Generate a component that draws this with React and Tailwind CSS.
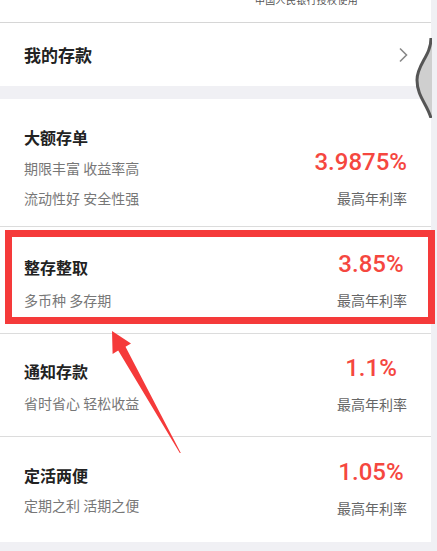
import React from 'react';

const cjk = { fontFamily: '"Noto Sans CJK SC", "Noto Sans", sans-serif' };
const num = { fontFamily: 'Roboto, "Noto Sans", sans-serif' };

const products = [
  { title: '大额存单', lines: ['期限丰富 收益率高', '流动性好 安全性强'], rate: '3.9875%', pad: 'pt-[27px] pb-[17px]', gap: 'mt-[8px]', border: true },
  { title: '整存整取', lines: ['多币种 多存期'], rate: '3.85%', pad: 'pt-[29px] pb-[22px]', gap: 'mt-[11px]', border: true },
  { title: '通知存款', lines: ['省时省心 轻松收益'], rate: '1.1%', pad: 'pt-[26px] pb-[21px]', gap: 'mt-[10px]', border: true },
  { title: '定活两便', lines: ['定期之利 活期之便'], rate: '1.05%', pad: 'pt-[27px] pb-[23px]', gap: 'mt-[8px]', border: false },
];

function Product({ p }) {
  return (
    <div className={`flex items-stretch justify-between pl-[24px] pr-[24px] ${p.pad} ${p.border ? 'border-b border-[#dcdcdc]' : ''}`}>
      <div className="flex flex-col">
        <div className="text-[16px] leading-[22px] font-bold text-[#222]" style={cjk}>{p.title}</div>
        {p.lines.map((l, i) => (
          <div key={i} className={`text-[14px] leading-[22px] text-[#777] ${i === 0 ? (p.lines.length > 1 ? 'mt-[9px]' : p.gap) : p.gap}`} style={cjk}>
            {l}
          </div>
        ))}
      </div>
      <div className="flex flex-col items-end justify-end">
        <div className="min-w-[72px] text-center text-[24px] leading-[16px] font-medium text-[#f5473f]" style={num}>
          {p.rate}
        </div>
        <div className="mt-[17px] text-[14px] leading-[22px] text-[#666]" style={cjk}>最高年利率</div>
      </div>
    </div>
  );
}

export default function App() {
  return (
    <div className="relative w-[437px] h-[551px] overflow-hidden bg-[#f0f0f4]">
      <div className="w-[431px] bg-white">
        {/* top caption, cut off by the screen edge */}
        <div className="h-[23px] overflow-hidden border-b border-[#d6d6d6]">
          <p className="mt-[-6px] pl-[255px] text-[10px] leading-[12px] text-[#555] tracking-[0.3px]" style={cjk}>
            中国人民银行授权使用
          </p>
        </div>
        {/* my deposits */}
        <div className="h-[63px] flex items-center justify-between pl-[24px] pr-[22px]">
          <span className="text-[17px] font-bold text-[#222]" style={cjk}>我的存款</span>
          <svg width="11" height="16" viewBox="0 0 11 16" fill="none">
            <path d="M2 1.5 L8.5 8 L2 14.5" stroke="#888" strokeWidth="1.6" />
          </svg>
        </div>
      </div>

      <div className="h-[13px]" />

      <div className="w-[431px] bg-white">
        {products.map((p) => (
          <Product key={p.title} p={p} />
        ))}
      </div>

      {/* scroll handle on the right */}
      <svg className="absolute left-[415px] top-[38px]" width="17" height="80" viewBox="0 0 17 80">
        <path d="M16 0 C16 18 2 26 2 42 C2 58 12 66 16 80 L17 80 L17 0 Z" fill="#cfcfcf" />
        <path d="M16 0 C16 18 2 26 2 42 C2 58 12 66 16 80" fill="none" stroke="#555" strokeWidth="3" />
      </svg>

      {/* highlight box */}
      <div className="absolute left-[5px] top-[230px] w-[430px] h-[94px] border-[7px] border-[#f53a3a]" />

      {/* arrow */}
      <svg className="absolute left-0 top-0" width="437" height="551" viewBox="0 0 437 551">
        <polygon
          points="112,331 131,343.5 125.5,346.8 180.8,453 179.8,453 118.2,350.6 112.6,354"
          fill="#f53a3a"
        />
      </svg>
    </div>
  );
}
